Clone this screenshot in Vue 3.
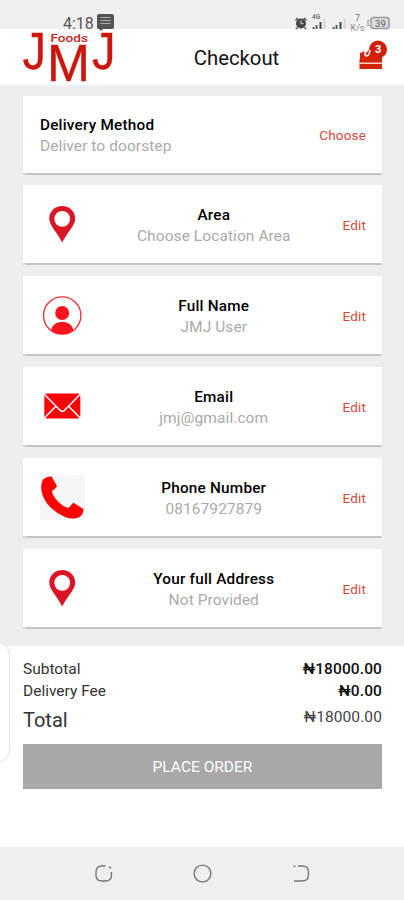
<script setup>
const rows = [
  { icon: 'pin', title: 'Area', value: 'Choose Location Area' },
  { icon: 'user', title: 'Full Name', value: 'JMJ User' },
  { icon: 'mail', title: 'Email', value: 'jmj@gmail.com' },
  { icon: 'phone', title: 'Phone Number', value: '08167927879' },
  { icon: 'pin', title: 'Your full Address', value: 'Not Provided' },
]
</script>

<template>
  <div class="screen">
    <div class="status">
      <span class="time">4:18</span>
      <svg class="sim" width="17" height="17" viewBox="0 0 17 17">
        <path d="M2 0h13q2 0 2 2v11q0 2-2 2H6l-2 2-2-2q-2 0-2-2V2q0-2 2-2z" fill="#555" />
        <path d="M3.5 3.5h10M3.5 6.5h10M3.5 9.5h10" stroke="#aaa" stroke-width="1" />
      </svg>
      <svg class="indicators" width="98" height="20" viewBox="0 0 98 20">
        <circle cx="7" cy="10.5" r="5" fill="#484848" />
        <path d="M1.500 7.500L4 5M12.500 7.500L10 5M3.500 14.500L2 16M10.500 14.500L12 16" stroke="#555" stroke-width="1.600" />
        <path d="M7 7.500v3.200h2.500" fill="none" stroke="#ddd" stroke-width="1" />
        <text x="18" y="6" font-size="6.500" font-weight="700" fill="#777">4G</text>
        <path d="M19.500 14v2M22.500 12v4M39.500 14v2M42.500 12v4" stroke="#555" stroke-width="1.800" />
        <path d="M26.500 9v7M46.500 9v7" stroke="#444" stroke-width="2" />
        <path d="M30.500 6v10M50.500 6v10" stroke="#d6d6d6" stroke-width="2" />
        <text x="61" y="8" font-size="9" fill="#777">7</text>
        <text x="56.500" y="17.500" font-size="9" fill="#888" textLength="14">K/s</text>
        <rect x="77" y="4.500" width="18" height="11" rx="2.500" fill="#ddd" stroke="#999" stroke-width="1.500" />
        <path d="M75.500 7.500h-1.500v5h1.500" fill="none" stroke="#999" stroke-width="1.200" />
        <text x="81" y="13.500" font-size="9.500" font-weight="500" fill="#777">39</text>
      </svg>
    </div>

    <header class="header">
      <svg class="logo" width="94" height="54" viewBox="0 0 94 54">
        <text class="letter" x="-0.500" y="40.300" font-size="52" textLength="23.500" lengthAdjust="spacingAndGlyphs">J</text>
        <text class="letter" x="24" y="52.300" font-size="51" textLength="43" lengthAdjust="spacingAndGlyphs">M</text>
        <text class="letter" x="69" y="40.300" font-size="52" textLength="23.500" lengthAdjust="spacingAndGlyphs">J</text>
        <text class="foods" x="27.500" y="13" textLength="37.500" lengthAdjust="spacingAndGlyphs">Foods</text>
      </svg>
      <h1 class="heading">Checkout</h1>
      <svg class="bag" width="30" height="32" viewBox="0 0 30 32">
        <path d="M2 24V13.500q0-1 2-1l2-1.500 2 2 5-5h6l5 8v8z" fill="#d42206" />
        <circle cx="20" cy="9.500" r="9" fill="#cf2007" />
        <path d="M7 11.500q-.5 4 1.500 4.500 3-.5 3.500-6" fill="none" stroke="#fff" stroke-width="1.500" />
        <rect x="1.500" y="19" width="22.500" height="10" fill="#d42206" />
        <path d="M1.500 23.200H24" stroke="#fff" stroke-width="1.200" />
        <text x="17" y="13" font-size="11" font-weight="700" fill="#fff">3</text>
      </svg>
    </header>

    <main class="cards">
      <section class="card method">
        <div class="copy">
          <span class="title">Delivery Method</span>
          <span class="value">Deliver to doorstep</span>
        </div>
        <span class="action">Choose</span>
      </section>
      <section v-for="row in rows" :key="row.title" class="card">
        <div class="icon" :class="row.icon">
          <svg v-if="row.icon === 'pin'" width="44" height="44" viewBox="0 0 44 44">
            <path d="M22.200 4C14.800 4 9.300 9.500 9.300 16.500C9.300 24 16.500 29 22.200 40.500C27.900 29 35.200 24 35.200 16.500C35.200 9.500 29.600 4 22.200 4z" fill="#dc1526" />
            <circle cx="22.200" cy="16.800" r="7.900" fill="#fff" />
          </svg>
          <svg v-else-if="row.icon === 'user'" width="44" height="44" viewBox="0 0 44 44">
            <circle cx="22.200" cy="22.500" r="18.700" fill="none" stroke="#f32a30" stroke-width="1.300" />
            <circle cx="22.200" cy="20" r="7" fill="#fb141d" />
            <path d="M11 37C12.500 31.500 16.500 29 22.200 29S32 31.500 33.400 37Q28.500 41.200 22.200 41.200T11 37z" fill="#fb141d" />
          </svg>
          <svg v-else-if="row.icon === 'mail'" width="44" height="44" viewBox="0 0 44 44">
            <rect x="4.300" y="9.500" width="36" height="25" rx="2.500" fill="#fb0207" />
            <path d="M4.500 10.500L19.800 26Q22.300 28.500 24.800 26L40 10.500M4.500 33.800L16.200 22M40 33.800L28.400 22" fill="none" stroke="#fff" stroke-width="1.500" />
          </svg>
          <svg v-else width="45" height="45" viewBox="0 0 45 45">
            <path d="M3 4.500Q7 .8 11.500 1.500L17 11Q16 13.500 11.800 16Q13 21.500 18 26.500T28.500 33Q31.500 29.500 33.500 27.800L43.500 34Q43.500 39.500 39.500 42Q33 45 25 42Q15 38 7.500 29Q1 20 1.200 12Q1.500 7 3 4.500z" fill="#fb0203" />
          </svg>
        </div>
        <div class="copy centered">
          <span class="title">{{ row.title }}</span>
          <span class="value">{{ row.value }}</span>
        </div>
        <span class="action">Edit</span>
      </section>
    </main>

    <footer class="summary">
      <div class="edge-panel"></div>
      <div class="line"><span class="label">Subtotal</span><span class="amount">₦18000.00</span></div>
      <div class="line"><span class="label">Delivery Fee</span><span class="amount">₦0.00</span></div>
      <div class="line total"><span class="label">Total</span><span class="amount">₦18000.00</span></div>
      <button class="order">PLACE ORDER</button>
    </footer>

    <nav class="nav">
      <svg width="20" height="20" viewBox="0 0 20 20">
        <path d="M11.500 2H8Q2 2 2 8v3q0 6 6 6h3.500q6 0 6-6V8" fill="none" stroke="#777" stroke-width="1.400" />
        <circle cx="16" cy="3.500" r="1.200" fill="#888" />
      </svg>
      <svg width="20" height="20" viewBox="0 0 20 20">
        <circle cx="9.500" cy="9.500" r="8.400" fill="none" stroke="#777" stroke-width="1.400" />
      </svg>
      <svg width="20" height="20" viewBox="0 0 20 20">
        <path d="M7 2h4q6.500 0 6.500 6v3q0 6-6.500 6H3" fill="none" stroke="#777" stroke-width="1.400" />
        <circle cx="3.500" cy="2.300" r="1.100" fill="#888" />
      </svg>
    </nav>
  </div>
</template>

<style>
body { background: #fff; }
</style>

<style scoped>
.screen {
  width: 404px;
  height: 900px;
  display: flex;
  flex-direction: column;
  overflow: hidden;
  background: #eee;
  font-family: Roboto, "Liberation Sans", sans-serif;
  color: #111;
}
.status {
  position: relative;
  z-index: 1;
  height: 29px;
  flex: none;
  box-sizing: border-box;
  display: flex;
  align-items: flex-start;
  padding: 14px 12px 0 63px;
  background: #f0f0f0;
}
.time { font-size: 16px; line-height: 19px; color: #555; width: 34px; }
.indicators { margin-left: auto; margin-top: -1px; overflow: visible; }
.header {
  height: 56px;
  flex: none;
  display: grid;
  grid-template-columns: 94px 1fr 30px;
  padding: 0 16px 0 23px;
  background: #fff;
}
.logo { overflow: visible; }
.letter { font-family: "Liberation Sans", sans-serif; fill: #cc160b; stroke: #cc160b; stroke-width: 0.4px; }
.foods { font-family: Roboto, sans-serif; font-size: 11.500px; font-weight: 500; fill: #cc2418; }
.heading {
  margin: 0;
  padding-right: 2px;
  font-size: 20.3px;
  line-height: 59px;
  font-weight: 400;
  text-align: center;
  letter-spacing: 0;
}
.bag { margin-top: 11px; }
.cards {
  height: 561px;
  flex: none;
  box-sizing: border-box;
  padding: 11px 22px 0 23px;
  display: flex;
  flex-direction: column;
  gap: 13px;
}
.card {
  height: 78px;
  box-sizing: border-box;
  display: flex;
  align-items: center;
  padding: 0 16px 0 17px;
  background: #fff;
  box-shadow: 0 1.5px 1px #c4c4c4;
}
.method { height: 77px; margin-bottom: -1px; }
.copy { flex: 1; display: flex; flex-direction: column; padding-top: 3px; }
.centered { align-items: center; padding-top: 4px; }
.title { font-size: 15.3px; line-height: 21px; font-weight: 500; color: #000; letter-spacing: 0.22px; white-space: nowrap; }
.value { font-size: 15.5px; line-height: 22px; margin-top: -1px; padding-bottom: 1px; color: #aaa; letter-spacing: 0.08px; white-space: nowrap; }
.icon { width: 45px; height: 45px; display: flex; }
.phone { background: #f6f6f6; }
.action { font-size: 13.5px; line-height: 20px; color: #d34b3c; letter-spacing: 0.15px; padding-top: 1px; }
.summary {
  position: relative;
  height: 201px;
  flex: none;
  box-sizing: border-box;
  padding: 12px 22px 0 23px;
  background: #fff;
}
.edge-panel {
  position: absolute;
  left: -20px;
  top: -5px;
  width: 28px;
  height: 120px;
  border: 1px solid #e4e4e4;
  border-radius: 14px;
  background: #fff;
}
.line { display: flex; justify-content: space-between; height: 22px; line-height: 22px; font-size: 15.5px; }
.label { color: #333; letter-spacing: 0; }
.amount { font-weight: 500; letter-spacing: 0.1px; color: #111; }
.total { height: 42px; padding-top: 0; }
.total .label { font-size: 20px; line-height: 37px; }
.total .amount { line-height: 31px; font-weight: 400; color: #444; }
.order {
  display: block;
  width: 100%;
  height: 45px;
  padding: 0;
  border: 0;
  background: #a8a8a8;
  color: #fff;
  font: 400 15.5px/46px Roboto, sans-serif;
}
.nav {
  flex: 1;
  display: flex;
  justify-content: space-between;
  align-items: center;
  padding: 0 93px 0 94px;
  background: #efefef;
}
</style>
